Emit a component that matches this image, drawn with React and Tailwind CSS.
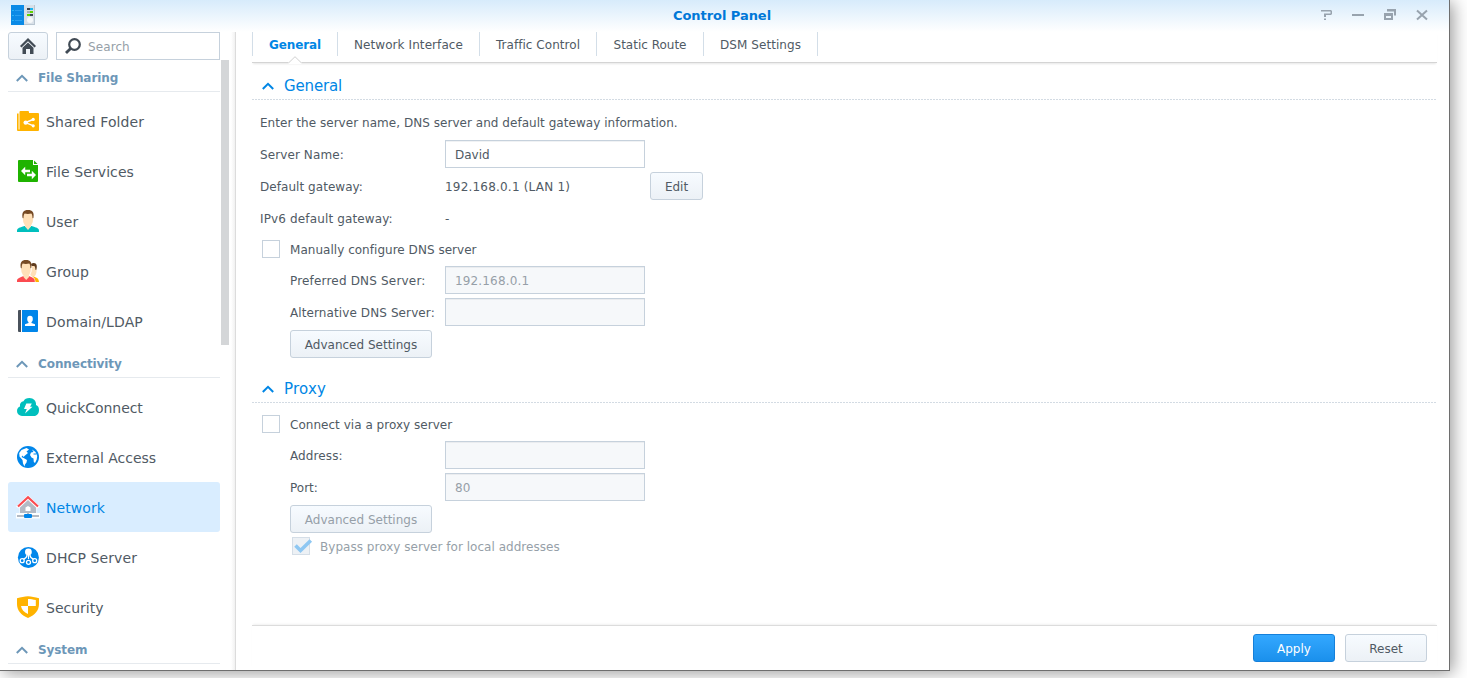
import React from 'react';

function Chevron({ className }) {
  return (
    <svg width="12" height="8" viewBox="0 0 12 8" className={className} fill="none" stroke="currentColor">
      <path d="M0.8 7 L6 1.8 L11.2 7" strokeWidth="2" />
    </svg>
  );
}

function Svg({ children }) {
  return (
    <svg width="24" height="24" viewBox="0 0 24 24" className="shrink-0">
      {children}
    </svg>
  );
}

const icons = {
  folder: (
    <Svg>
      <g transform="translate(0 1)">
        <path d="M1 3.5h1.6v16H4V21H2a1 1 0 0 1-1-1z" fill="#ffb300" />
        <path d="M3.500 2a1 1 0 0 1 1-1H12a1 1 0 0 1 1 1v1h9a1 1 0 0 1 1 1v16a1 1 0 0 1-1 1H3.500z" fill="#ffb300" />
        <path d="M17 9.500 9.500 12.600 17 15.700" stroke="#fff" strokeWidth="1.400" fill="none" />
        <circle cx="9.700" cy="12.600" r="2.200" fill="#fff" />
        <circle cx="17.200" cy="9.400" r="1.600" fill="#fff" />
        <circle cx="17.200" cy="15.800" r="1.600" fill="#fff" />
      </g>
    </Svg>
  ),
  file: (
    <Svg>
      <path d="M3 1h14v5H22V22a1 1 0 0 1-1 1H3a1 1 0 0 1-1-1V2a1 1 0 0 1 1-1z" fill="#1fb300" />
      <path d="M18 1.400 21.600 5H18z" fill="#1fb300" />
      <path d="M5 12 9.200 7.800V10.800H14V13.200H9.200V16.200zM20 16 15.800 11.800V14.800H11V17.200H15.800V20.200z" fill="#fff" />
    </Svg>
  ),
  user: (
    <Svg>
      <path d="M1 23v-1.500c0-2.300 3-3.200 7.500-4.500h7c4.500 1.300 7.500 2.200 7.500 4.500V23z" fill="#00bfbd" />
      <path d="M9 14h6v3.500L12 21l-3-3.500z" fill="#ffe0b8" />
      <ellipse cx="12" cy="9.500" rx="5.200" ry="8" fill="#ffe0b8" />
      <path d="M6.600 9C5.500 3.500 7.500 1 12 1s6.500 2.500 5.400 8l-.9.200c0-2-.3-3.700-1.200-4.700-2 .6-5 .6-6.600 0C7.800 5.500 7.500 7 7.500 9.200z" fill="#764a24" />
    </Svg>
  ),
  group: (
    <Svg>
      <ellipse cx="17" cy="11.500" rx="3.600" ry="6.500" fill="#ffe0b8" />
      <path d="M15 5c2.500-1.800 6-.8 5.800 2.500 0 1.500-.3 2.500-.6 3.500l-.8-.2c0-2-.4-3-1-3.800H15z" fill="#5f3b1e" />
      <path d="M18 23c0-2 .2-4-1.500-5.500C21 18 23 20 23 23z" fill="#ffb300" />
      <path d="M0 23v-1.500c0-3 3-3.500 6.500-4.800l8 .2c3.500 1.300 4.700 2.200 5 6.100z" fill="#fff" />
      <ellipse cx="10" cy="9.500" rx="5.900" ry="8.400" fill="#fff" />
      <path d="M1 23v-1c0-2.500 2.500-3.300 6-4.700h6.500c3.500 1.400 5.300 2.200 5.300 4.700v1z" fill="#fb4b50" />
      <path d="M7.500 14h5.500v4L10.200 21 7.500 18z" fill="#ffe0b8" />
      <ellipse cx="10" cy="9.700" rx="4.900" ry="8" fill="#ffe0b8" />
      <path d="M4.800 9C3.800 3.500 5.500 1 10 1s6.200 2.500 5.200 8l-.8.200c0-2-.3-3.700-1.200-4.700-2 .6-5 .6-6.400 0-.9 1-1.100 2.500-1.100 4.700z" fill="#764a24" />
    </Svg>
  ),
  domain: (
    <Svg>
      <path d="M2 2a1 1 0 0 1 1-1h2v22H3a1 1 0 0 1-1-1z" fill="#4a525c" />
      <path d="M6 1h15a1 1 0 0 1 1 1v20a1 1 0 0 1-1 1H6z" fill="#0086ea" />
      <ellipse cx="14" cy="10" rx="2.800" ry="3.200" fill="#fff" />
      <path d="M12.500 11h3v3l3.500 1.200V17H9v-1.800l3.500-1.200z" fill="#fff" />
    </Svg>
  ),
  quick: (
    <Svg>
      <path d="M6 21a5 5 0 0 1-5-5c0-2.500 1.500-4 3-4.500C3.500 8.500 5 6.500 7.500 6.200 8.500 4 10.500 3 13.500 3c4 0 7 3 6.500 7 2 .8 3 2.500 3 5 0 3.500-2 6-5 6z" fill="#00bfbd" />
      <path d="M10.300 8.500h5.500l-1.700 3.200h2.400L9 18.600l1.800-4.600H8z" fill="#fff" />
    </Svg>
  ),
  globe: (
    <Svg>
      <circle cx="12" cy="12" r="11" fill="#0086ea" />
      <path d="M10.500 3 13 4.500 10.500 6.500 12 8 9 10.500 7.500 12l-1-1.500-1 1.500 3 1.500 2.500 1.500-.5 2.500L9 19.500 8.500 21.500 7 18.500 6.500 15 3.500 11.500 3.200 8 5.500 5z" fill="#fff" />
      <path d="M16 4.500 19.500 7l1.700 4-.5 3.500-1.700 3.500-1.200-1-.3-3.500-2-1-1.500-2.500 1-2.500 2.500-.5z" fill="#fff" />
      <path d="M17.500 9h2.500" stroke="#0086ea" />
    </Svg>
  ),
  network: (
    <Svg>
      <path d="M12 0 24 11.500 21.500 13.500 20.500 12.700V18H24v5.500H0V18H3.500V12.700L2.500 13.500 0 11.500z" fill="#fff" opacity=".9" />
      <path d="M1 20h22v2H1z" fill="#b3bac4" />
      <path d="M12 5 20 12.500V18H4V12.500z" fill="#b3bac4" />
      <path d="M12 18v3" stroke="#b3bac4" strokeWidth="2" />
      <path d="M9.500 16v-3.500L12 11l2.500 1.500V16z" fill="#fff" />
      <path d="M2 11.500 12 2.200 22 11.500" stroke="#fb4b50" strokeWidth="2.100" fill="none" />
      <rect x="8" y="19" width="8" height="4" rx="1" fill="#0086ea" />
    </Svg>
  ),
  dhcp: (
    <Svg>
      <circle cx="12.400" cy="12.500" r="10.500" fill="#0086ea" />
      <path d="M12.500 9v5M11 10C11 13 9 13.500 7 14.500M14 10c0 3 2 3.500 4 4.500" stroke="#fff" strokeWidth="1.200" fill="none" />
      <circle cx="12.400" cy="7" r="3.400" fill="#fff" />
      <circle cx="6.200" cy="15.700" r="2" stroke="#fff" strokeWidth="1.300" fill="#0086ea" />
      <circle cx="12.500" cy="17.300" r="2" stroke="#fff" strokeWidth="1.300" fill="#0086ea" />
      <circle cx="18.700" cy="15.700" r="2" stroke="#fff" strokeWidth="1.300" fill="#0086ea" />
    </Svg>
  ),
  shield: (
    <Svg>
      <path d="M1 3.200C5 2.400 8.500 1.300 12 1.300s7 1.100 11 1.900V9c0 6.500-4 11-11 14C5 20 1 15.500 1 9z" fill="#ffb300" />
      <path d="M12 4c2.600 0 5 .5 7.800 1v6H12z" fill="#fff" />
      <path d="M5 11h7v8c-4-1.800-6.500-4.500-7-8z" fill="#fff" />
    </Svg>
  ),
};

function Group({ title }) {
  return (
    <div className="flex h-8 shrink-0 items-center gap-[10px] border-b border-[#e6eaee] pl-2 pt-1 text-[12px] font-bold text-[#6d97b8]">
      <Chevron className="mt-px w-3" />
      <span className="tracking-[-0.08px]">{title}</span>
    </div>
  );
}

function Item({ icon, label, active, tracking = 'tracking-[0.08px]' }) {
  return (
    <div
      className={`flex h-[50px] shrink-0 items-center gap-1.5 rounded-[3px] pl-2 text-[14px] ${
        active ? 'bg-[#d9edff] text-[#0086e5]' : 'text-[#505a64]'
      }`}
    >
      {icons[icon]}
      <span className={`pt-0.5 ${tracking}`}>{label}</span>
    </div>
  );
}

function Button({ children, className = '' }) {
  return (
    <button
      className={`flex h-7 shrink-0 items-center justify-center rounded-[3px] border border-[#c6d1dc] bg-linear-to-b from-[#f7fbff] to-[#ecf1f6] ${className}`}
    >
      {children}
    </button>
  );
}

function Field({ value, disabled }) {
  return (
    <div
      className={`flex h-7 w-[200px] items-center border border-[#c6d1dc] pl-[9px] pt-px ${
        disabled ? 'bg-[#f6f8fa] text-[#969fa8] shadow-[inset_0_1px_0_#eaecef]' : 'bg-white shadow-[inset_0_1px_0_#f0f2f4]'
      }`}
    >
      {value}
    </div>
  );
}

function Row({ label, indent, tracking = '', children }) {
  return (
    <div className={`flex h-7 items-center ${indent ? 'pl-[30px]' : ''}`}>
      <span className={`pt-px ${indent ? 'w-[155px]' : 'w-[185px]'} ${tracking}`}>{label}</span>
      {children}
    </div>
  );
}

function Check({ label }) {
  return (
    <div className="flex h-[26px] items-center pl-0.5">
      <span className="size-[18px] border border-[#c6d1dc] bg-white" />
      <span className="pl-[10px] pt-0.5 tracking-[0.03px]">{label}</span>
    </div>
  );
}

function Section({ title, tracking, children }) {
  return (
    <section>
      <h2 className="flex h-[37px] items-center pl-[10px] pt-2 text-[15px] text-[#0086e5]">
        <Chevron />
        <span className={`pl-[10px] ${tracking}`}>{title}</span>
      </h2>
      <div className="-mt-px h-px bg-[repeating-linear-gradient(90deg,#d3dbe3_0_2px,transparent_2px_3px)]" />
      <div className="flex flex-col gap-1 pl-2 pt-2">{children}</div>
    </section>
  );
}

const tabs = [
  ['General', 'w-[85px] font-bold text-[#0086e5] tracking-[-0.1px]'],
  ['Network Interface', 'w-[142px] tracking-[0.08px]'],
  ['Traffic Control', 'w-[117px] tracking-[0.05px]'],
  ['Static Route', 'w-[107px]'],
  ['DSM Settings', 'w-[114px] tracking-[0.06px]'],
];

export default function App() {
  return (
    <div className="h-[678px] w-[1467px] overflow-hidden bg-white font-['DejaVu_Sans',Verdana,sans-serif] text-[12px] leading-4 text-[#505a64]">
      <div className="flex h-[671px] w-[1450px] flex-col border-b border-r border-[#6e6e6e] bg-white shadow-[3px_2px_16px_rgba(0,0,0,0.4)]">
        <header className="flex h-8 shrink-0 items-center bg-linear-to-b from-[#d7ebfb] to-white pl-[10px] pr-[19px]">
          <svg width="26" height="22" viewBox="0 0 26 22" className="mt-[-5px]">
            <rect x="14" y="2" width="11" height="20" fill="#b9c6d2" />
            <rect x="14" y="2" width="10" height="19" fill="#d8e0e8" />
            <rect x="1" y="2" width="13" height="20" fill="#0a8ae6" />
            <path d="M2 7.500h2M2 12.500h2M2 17.500h2" stroke="#25b4f5" />
            <path d="M5 7.500h7M5 12.500h7M5 17.500h7" stroke="#2b9ff0" />
            <path d="M17 6h6M17 9h6M17 12h6" stroke="#3c4650" strokeWidth="2" />
            <path d="M20 6h3" stroke="#1cb4f0" strokeWidth="2" />
            <path d="M17 9h3" stroke="#a4b0b8" strokeWidth="2" />
            <path d="M20 9h3M17 12h3" stroke="#5fd400" strokeWidth="2" />
            <circle cx="20" cy="17" r="3" fill="#f6f8fa" />
          </svg>
          <h1 className="flex-1 pl-[90px] text-center text-[13px] font-bold tracking-[-0.05px] text-[#0078d8]">Control Panel</h1>
          <svg width="112" height="14" viewBox="0 0 112 14" className="-mt-0.5" fill="#98a3ae" stroke="#98a3ae">
            <path d="M3 2H13L14 3V6L13 7H8V9H6V5.500H12.500V3.500H3zM6 10.500H8V12H6z" stroke="none" />
            <path d="M34 6h12v2H34z" stroke="none" />
            <path d="M69 1h9v6.500h-2V3.500h-7z" stroke="none" />
            <path fillRule="evenodd" d="M66 5h9v7h-9zM68 8v2h5V8z" stroke="none" />
            <path d="M99 2.500 109 11.500M109 2.500 99 11.500" strokeWidth="2" />
          </svg>
        </header>

        <div className="flex min-h-0 flex-1">
          <aside className="flex w-[236px] shrink-0 flex-col border-r border-[#dcdcdc] bg-[linear-gradient(90deg,#fff_231px,#f1f1f1_235px)] pl-2">
            <div className="flex gap-2">
              <Button className="w-10">
                <svg width="16" height="16" viewBox="0 0 16 16" fill="#414b55">
                  <path d="M8 0 16 8 14.500 9.600 8 3.200 1.500 9.600 0 8z" />
                  <path d="M8 4.400 13.500 9.700V16H10V11H6v5H2.500V9.700z" />
                </svg>
              </Button>
              <div className="flex h-7 w-[164px] items-center gap-[7px] border border-[#c6d1dc] bg-white pl-2 text-[#969fa8]">
                <svg width="16" height="16" viewBox="0 0 16 16" fill="none" stroke="#414b55">
                  <circle cx="9.500" cy="6.500" r="5.300" strokeWidth="2.200" />
                  <path d="M5.600 10.400 1 15" strokeWidth="2.800" />
                </svg>
                <span className="pt-px tracking-[0.1px]">Search</span>
              </div>
            </div>
            <div className="flex min-h-0 flex-1">
              <nav className="flex w-[212px] flex-col overflow-hidden">
                <Group title="File Sharing" />
                <div className="flex shrink-0 flex-col pt-1">
                  <Item icon="folder" label="Shared Folder" />
                  <Item icon="file" label="File Services" />
                  <Item icon="user" label="User" />
                  <Item icon="group" label="Group" />
                  <Item icon="domain" label="Domain/LDAP" tracking="tracking-[0.14px]" />
                </div>
                <Group title="Connectivity" />
                <div className="flex shrink-0 flex-col pt-1">
                  <Item icon="quick" label="QuickConnect" tracking="tracking-[-0.06px]" />
                  <Item icon="globe" label="External Access" tracking="tracking-[-0.03px]" />
                  <Item icon="network" label="Network" active />
                  <Item icon="dhcp" label="DHCP Server" tracking="tracking-[0.1px]" />
                  <Item icon="shield" label="Security" tracking="tracking-[0px]" />
                </div>
                <Group title="System" />
              </nav>
              <div className="ml-px h-[285px] w-2 bg-[#d4d6d8]" />
            </div>
          </aside>

          <main className="flex min-w-0 flex-1 flex-col pl-4 pr-3">
            <div className="relative flex h-[31px] shrink-0 border-b border-[#d4d4d4] shadow-[0_2px_2px_-1px_rgba(0,0,0,0.1)]">
              <div className="h-6 w-px bg-[#d3dee8]" />
              {tabs.map(([t, c]) => (
                <div key={t} className={`flex h-6 items-center justify-center border-r border-[#d3dee8] pt-px ${c}`}>
                  {t}
                </div>
              ))}
              <svg width="14" height="8" viewBox="0 0 14 8" className="absolute left-9 top-6">
                <path d="M0 7 7 0.500 14 7V8H0z" fill="#fff" />
                <path d="M0.500 7 7 0.700 13.500 7" fill="none" stroke="#d0d0d0" />
              </svg>
            </div>

            <div className="min-h-0 flex-1">
              <Section title="General" tracking="tracking-[-0.15px]">
                <p className="flex h-7 items-center pt-px tracking-[0.04px]">Enter the server name, DNS server and default gateway information.</p>
                <Row label="Server Name:" tracking="tracking-[0.1px]"><Field value="David" /></Row>
                <Row label="Default gateway:" tracking="tracking-[0.05px]">
                  <span className="w-[205px] pt-px tracking-[0.2px]">192.168.0.1 (LAN 1)</span>
                  <Button className="w-[53px] pt-px">Edit</Button>
                </Row>
                <Row label="IPv6 default gateway:" tracking="tracking-[0.14px]"><span className="pt-px">-</span></Row>
                <Check label="Manually configure DNS server" />
                <Row indent label="Preferred DNS Server:" tracking="tracking-[0.18px]"><Field disabled value={<span className="tracking-[0.15px]">192.168.0.1</span>} /></Row>
                <Row indent label="Alternative DNS Server:" tracking="tracking-[0.1px]"><Field disabled /></Row>
                <div className="pl-[30px]"><Button className="w-[142px] pt-px">Advanced Settings</Button></div>
              </Section>
              <div className="h-2" />
              <Section title="Proxy" tracking="tracking-[0.2px]">
                <Check label="Connect via a proxy server" />
                <Row indent label="Address:" tracking="tracking-[0.1px]"><Field disabled /></Row>
                <Row indent label="Port:"><Field disabled value="80" /></Row>
                <div className="pl-[30px]"><Button className="w-[142px] pt-px text-[#969fa8]">Advanced Settings</Button></div>
                <div className="flex h-[18px] items-center pl-8 text-[#969fa8]">
                  <span className="size-[18px] border border-[#d5dee7] bg-[#edf1f5]">
                    <svg width="20" height="16" viewBox="0 0 20 16" fill="none" className="max-w-none">
                      <path d="M2.500 7.500 7.500 12.500 17.800 2.500" stroke="#8ec7f2" strokeWidth="3.600" />
                    </svg>
                  </span>
                  <span className="pl-[10px] pt-px tracking-[0.03px]">Bypass proxy server for local addresses</span>
                </div>
              </Section>
            </div>

            <footer className="flex h-[45px] shrink-0 justify-end gap-[10px] border-t border-[#dcdcdc] pr-[10px] pt-2 shadow-[0_-2px_2px_-1px_rgba(0,0,0,0.06)]">
              <button className="flex h-7 w-[82px] items-center justify-center rounded-[3px] border border-[#1580da] bg-linear-to-b from-[#33a8ff] to-[#1a90ec] pt-px text-white">Apply</button>
              <Button className="w-[82px] pt-px">Reset</Button>
            </footer>
          </main>
        </div>
      </div>
    </div>
  );
}
